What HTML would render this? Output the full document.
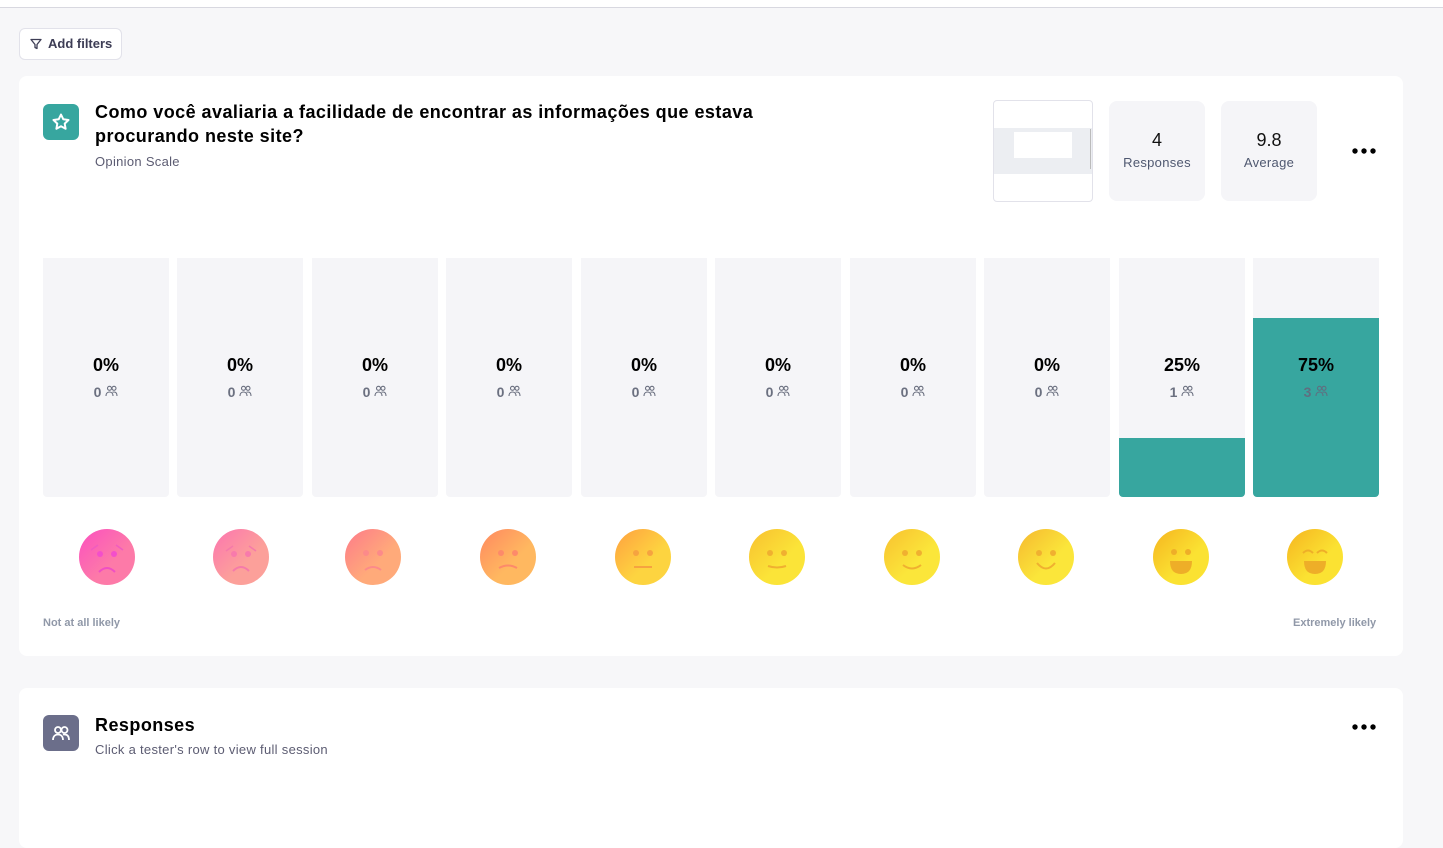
<!DOCTYPE html>
<html><head><meta charset="utf-8"><style>
body{margin:0;width:1443px;height:829px;background:#f7f7f9;font-family:"Liberation Sans",sans-serif;position:relative;overflow:hidden}
.top{position:absolute;left:0;top:0;width:1443px;height:7px;background:#fff;border-bottom:1px solid #d8d8e0}
.btn{position:absolute;left:19px;top:28px;width:101px;height:30px;background:#fff;border:1px solid #e2e2ea;border-radius:6px;font-size:13px;font-weight:bold;color:#3d3d55;line-height:30px}
.card{position:absolute;left:19px;background:#fff;border-radius:8px;width:1384px}
.ico{position:absolute;width:36px;height:36px;border-radius:6px}
.title{position:absolute;font-size:18px;font-weight:bold;color:#000;line-height:24px;letter-spacing:.45px}
.sub{position:absolute;font-size:13px;color:#5c5c72;letter-spacing:.3px}
.stat{position:absolute;top:25px;width:96px;height:100px;background:#f5f5f8;border-radius:8px;text-align:center}
.stat b{display:block;font-weight:normal;font-size:18px;color:#111;margin-top:29px;margin-bottom:3px}
.stat span{font-size:13px;color:#4f5870;letter-spacing:.3px}
.dots{position:absolute;line-height:0}
.col{position:absolute;top:258px;width:126px;height:239px;background:#f5f5f8;border-radius:0 0 4px 4px;overflow:hidden}
.fill{position:absolute;left:0;bottom:0;width:100%;background:#37a69f}
.pct{position:absolute;top:97px;width:100%;text-align:center;font-size:18px;font-weight:bold;color:#000}
.cnt{position:absolute;top:126px;width:100%;text-align:center;font-size:14px;font-weight:bold;color:#6b7080}
.emo{position:absolute;top:528px;width:58px;height:58px}
.lab{position:absolute;top:617px;font-size:11px;font-weight:bold;color:#9098a8}
</style></head><body>
<div class="top"></div>
<div class="btn"><svg width="12" height="12" viewBox="0 0 12 12" style="position:absolute;left:10px;top:9px"><path d="M1 1.5h10L7 6.5v4L5 9.5v-3z" fill="none" stroke="#3d3d55" stroke-width="1.3" stroke-linejoin="round"/></svg><span style="position:absolute;left:28px">Add filters</span></div>

<div class="card" style="top:76px;height:580px">
<div class="ico" style="left:24px;top:28px;background:#37a69f"><svg width="36" height="36" viewBox="0 0 36 36"><path d="M18 10.5l2.3 4.8 5.2.7-3.8 3.6.9 5.2-4.6-2.5-4.6 2.5.9-5.2-3.8-3.6 5.2-.7z" fill="none" stroke="#fff" stroke-width="2" stroke-linejoin="round"/></svg></div>
<div class="title" style="left:76px;top:24px;width:700px">Como você avaliaria a facilidade de encontrar as informações que estava procurando neste site?</div>
<div class="sub" style="left:76px;top:78px">Opinion Scale</div>
<div style="position:absolute;left:974px;top:24px;width:98px;height:100px;border:1px solid #e2e2ea;border-radius:4px;overflow:hidden;background:#fff">
<div style="position:absolute;left:0;top:27px;width:98px;height:46px;background:#eceef2"></div>
<div style="position:absolute;left:20px;top:31px;width:58px;height:26px;background:#fff"></div>
<div style="position:absolute;left:96px;top:28px;width:1px;height:40px;background:#bbb"></div>
</div>
<div class="stat" style="left:1090px"><b>4</b><span>Responses</span></div>
<div class="stat" style="left:1202px"><b>9.8</b><span>Average</span></div>
<div class="dots" style="left:1333px;top:72px">
<svg width="26" height="6"><circle cx="3" cy="3" r="2.7"/><circle cx="12" cy="3" r="2.7"/><circle cx="21" cy="3" r="2.7"/></svg></div>
</div>

<!-- columns -->
<div class="col" style="left:43px"><div class="pct">0%</div><div class="cnt">0 <svg width="13" height="12" viewBox="0 0 13 12"><g fill="none" stroke="#6b7080" stroke-width="1.1"><circle cx="4.5" cy="3.3" r="2"/><circle cx="9" cy="3.3" r="2"/><path d="M1 11c0-3 2-4 3.5-4s3.5 1 3.5 4M7.5 7.2c.5-.2 1-.2 1.5-.2 1.5 0 3 1 3 4"/></g></svg></div></div>
<div class="col" style="left:177px"><div class="pct">0%</div><div class="cnt">0 <svg width="13" height="12" viewBox="0 0 13 12"><g fill="none" stroke="#6b7080" stroke-width="1.1"><circle cx="4.5" cy="3.3" r="2"/><circle cx="9" cy="3.3" r="2"/><path d="M1 11c0-3 2-4 3.5-4s3.5 1 3.5 4M7.5 7.2c.5-.2 1-.2 1.5-.2 1.5 0 3 1 3 4"/></g></svg></div></div>
<div class="col" style="left:312px"><div class="pct">0%</div><div class="cnt">0 <svg width="13" height="12" viewBox="0 0 13 12"><g fill="none" stroke="#6b7080" stroke-width="1.1"><circle cx="4.5" cy="3.3" r="2"/><circle cx="9" cy="3.3" r="2"/><path d="M1 11c0-3 2-4 3.5-4s3.5 1 3.5 4M7.5 7.2c.5-.2 1-.2 1.5-.2 1.5 0 3 1 3 4"/></g></svg></div></div>
<div class="col" style="left:446px"><div class="pct">0%</div><div class="cnt">0 <svg width="13" height="12" viewBox="0 0 13 12"><g fill="none" stroke="#6b7080" stroke-width="1.1"><circle cx="4.5" cy="3.3" r="2"/><circle cx="9" cy="3.3" r="2"/><path d="M1 11c0-3 2-4 3.5-4s3.5 1 3.5 4M7.5 7.2c.5-.2 1-.2 1.5-.2 1.5 0 3 1 3 4"/></g></svg></div></div>
<div class="col" style="left:581px"><div class="pct">0%</div><div class="cnt">0 <svg width="13" height="12" viewBox="0 0 13 12"><g fill="none" stroke="#6b7080" stroke-width="1.1"><circle cx="4.5" cy="3.3" r="2"/><circle cx="9" cy="3.3" r="2"/><path d="M1 11c0-3 2-4 3.5-4s3.5 1 3.5 4M7.5 7.2c.5-.2 1-.2 1.5-.2 1.5 0 3 1 3 4"/></g></svg></div></div>
<div class="col" style="left:715px"><div class="pct">0%</div><div class="cnt">0 <svg width="13" height="12" viewBox="0 0 13 12"><g fill="none" stroke="#6b7080" stroke-width="1.1"><circle cx="4.5" cy="3.3" r="2"/><circle cx="9" cy="3.3" r="2"/><path d="M1 11c0-3 2-4 3.5-4s3.5 1 3.5 4M7.5 7.2c.5-.2 1-.2 1.5-.2 1.5 0 3 1 3 4"/></g></svg></div></div>
<div class="col" style="left:850px"><div class="pct">0%</div><div class="cnt">0 <svg width="13" height="12" viewBox="0 0 13 12"><g fill="none" stroke="#6b7080" stroke-width="1.1"><circle cx="4.5" cy="3.3" r="2"/><circle cx="9" cy="3.3" r="2"/><path d="M1 11c0-3 2-4 3.5-4s3.5 1 3.5 4M7.5 7.2c.5-.2 1-.2 1.5-.2 1.5 0 3 1 3 4"/></g></svg></div></div>
<div class="col" style="left:984px"><div class="pct">0%</div><div class="cnt">0 <svg width="13" height="12" viewBox="0 0 13 12"><g fill="none" stroke="#6b7080" stroke-width="1.1"><circle cx="4.5" cy="3.3" r="2"/><circle cx="9" cy="3.3" r="2"/><path d="M1 11c0-3 2-4 3.5-4s3.5 1 3.5 4M7.5 7.2c.5-.2 1-.2 1.5-.2 1.5 0 3 1 3 4"/></g></svg></div></div>
<div class="col" style="left:1119px"><div class="fill" style="height:59px"></div><div class="pct">25%</div><div class="cnt">1 <svg width="13" height="12" viewBox="0 0 13 12"><g fill="none" stroke="#6b7080" stroke-width="1.1"><circle cx="4.5" cy="3.3" r="2"/><circle cx="9" cy="3.3" r="2"/><path d="M1 11c0-3 2-4 3.5-4s3.5 1 3.5 4M7.5 7.2c.5-.2 1-.2 1.5-.2 1.5 0 3 1 3 4"/></g></svg></div></div>
<div class="col" style="left:1253px"><div class="fill" style="height:179px"></div><div class="pct">75%</div><div class="cnt" style="color:#5f6f80">3 <svg width="13" height="12" viewBox="0 0 13 12"><g fill="none" stroke="#5f6f80" stroke-width="1.1"><circle cx="4.5" cy="3.3" r="2"/><circle cx="9" cy="3.3" r="2"/><path d="M1 11c0-3 2-4 3.5-4s3.5 1 3.5 4M7.5 7.2c.5-.2 1-.2 1.5-.2 1.5 0 3 1 3 4"/></g></svg></div></div>

<!-- emojis -->
<svg class="emo" style="left:78px" viewBox="0 0 58 58"><defs><linearGradient id="g1" x1="0" y1="0" x2="1" y2="1"><stop offset="0" stop-color="#fb4fc0"/><stop offset=".6" stop-color="#fd7aa8"/></linearGradient></defs><circle cx="29" cy="29" r="28" fill="url(#g1)"/><path d="M13 22l7-5M45 22l-7-5" stroke="#f05cc0" stroke-width="1.5"/><circle cx="22" cy="26" r="3" fill="#f34fcb"/><circle cx="36" cy="26" r="3" fill="#f34fcb"/><path d="M21 44q8-8 16 0" fill="none" stroke="#f04fc4" stroke-width="2"/></svg>
<svg class="emo" style="left:212px" viewBox="0 0 58 58"><defs><linearGradient id="g2" x1="0" y1="0" x2="1" y2="1"><stop offset="0" stop-color="#fc74b0"/><stop offset=".6" stop-color="#fca09a"/></linearGradient></defs><circle cx="29" cy="29" r="28" fill="url(#g2)"/><path d="M14 23l7-5M44 23l-7-5" stroke="#f57aaa" stroke-width="1.5"/><circle cx="22" cy="26" r="3" fill="#f87aac"/><circle cx="36" cy="26" r="3" fill="#f87aac"/><path d="M21 43q8-8 16 0" fill="none" stroke="#f57aaa" stroke-width="2"/></svg>
<svg class="emo" style="left:344px" viewBox="0 0 58 58"><defs><linearGradient id="g3" x1="0" y1="0" x2="1" y2="1"><stop offset="0" stop-color="#fd7a8a"/><stop offset=".6" stop-color="#ffaa7a"/></linearGradient></defs><circle cx="29" cy="29" r="28" fill="url(#g3)"/><circle cx="22" cy="25" r="3" fill="#fc8a8a"/><circle cx="36" cy="25" r="3" fill="#fc8a8a"/><path d="M21 42q8-6 16 0" fill="none" stroke="#fc8a8a" stroke-width="2"/></svg>
<svg class="emo" style="left:479px" viewBox="0 0 58 58"><defs><linearGradient id="g4" x1="0" y1="0" x2="1" y2="1"><stop offset="0" stop-color="#ff8860"/><stop offset=".6" stop-color="#ffb860"/></linearGradient></defs><circle cx="29" cy="29" r="28" fill="url(#g4)"/><circle cx="22" cy="25" r="3" fill="#fd8a6a"/><circle cx="36" cy="25" r="3" fill="#fd8a6a"/><path d="M20 40q9-5 18 0" fill="none" stroke="#fd8a6a" stroke-width="2"/></svg>
<svg class="emo" style="left:614px" viewBox="0 0 58 58"><defs><linearGradient id="g5" x1="0" y1="0" x2="1" y2="1"><stop offset="0" stop-color="#ffa040"/><stop offset=".6" stop-color="#fdd440"/></linearGradient></defs><circle cx="29" cy="29" r="28" fill="url(#g5)"/><circle cx="22" cy="25" r="3" fill="#f6a340"/><circle cx="36" cy="25" r="3" fill="#f6a340"/><path d="M20 39h18" stroke="#f6a340" stroke-width="2"/></svg>
<svg class="emo" style="left:748px" viewBox="0 0 58 58"><defs><linearGradient id="g6" x1="0" y1="0" x2="1" y2="1"><stop offset="0" stop-color="#f8c030"/><stop offset=".6" stop-color="#fbe438"/></linearGradient></defs><circle cx="29" cy="29" r="28" fill="url(#g6)"/><circle cx="22" cy="25" r="3" fill="#f0b030"/><circle cx="36" cy="25" r="3" fill="#f0b030"/><path d="M20 38q9 3 18 0" fill="none" stroke="#f0b030" stroke-width="2"/></svg>
<svg class="emo" style="left:883px" viewBox="0 0 58 58"><defs><linearGradient id="g7" x1="0" y1="0" x2="1" y2="1"><stop offset="0" stop-color="#f8c030"/><stop offset=".6" stop-color="#fbe63a"/></linearGradient></defs><circle cx="29" cy="29" r="28" fill="url(#g7)"/><circle cx="22" cy="25" r="3" fill="#f0b030"/><circle cx="36" cy="25" r="3" fill="#f0b030"/><path d="M20 37q9 7 18 0" fill="none" stroke="#f0b030" stroke-width="2"/></svg>
<svg class="emo" style="left:1017px" viewBox="0 0 58 58"><defs><linearGradient id="g8" x1="0" y1="0" x2="1" y2="1"><stop offset="0" stop-color="#f5b830"/><stop offset=".6" stop-color="#fbe63a"/></linearGradient></defs><circle cx="29" cy="29" r="28" fill="url(#g8)"/><circle cx="22" cy="25" r="3" fill="#f0b030"/><circle cx="36" cy="25" r="3" fill="#f0b030"/><path d="M20 35q9 11 18 0" fill="none" stroke="#f0b030" stroke-width="2"/></svg>
<svg class="emo" style="left:1152px" viewBox="0 0 58 58"><defs><linearGradient id="g9" x1="0" y1="0" x2="1" y2="1"><stop offset="0" stop-color="#f5b420"/><stop offset=".6" stop-color="#fbe232"/></linearGradient></defs><circle cx="29" cy="29" r="28" fill="url(#g9)"/><circle cx="22" cy="24" r="3" fill="#eeae28"/><circle cx="36" cy="24" r="3" fill="#eeae28"/><path d="M18 33h22q0 13-11 13t-11-13z" fill="#eeae28"/></svg>
<svg class="emo" style="left:1286px" viewBox="0 0 58 58"><defs><linearGradient id="g10" x1="0" y1="0" x2="1" y2="1"><stop offset="0" stop-color="#f5b420"/><stop offset=".6" stop-color="#fbe232"/></linearGradient></defs><circle cx="29" cy="29" r="28" fill="url(#g10)"/><path d="M17 25q5-5 10 0M31 25q5-5 10 0" fill="none" stroke="#eeae28" stroke-width="2"/><path d="M18 33h22q0 13-11 13t-11-13z" fill="#eeae28"/></svg>

<div class="lab" style="left:43px">Not at all likely</div>
<div class="lab" style="left:1293px">Extremely likely</div>

<div class="card" style="top:688px;height:160px">
<div class="ico" style="left:24px;top:27px;background:#6b6e8a"><svg width="36" height="36" viewBox="0 0 36 36"><g fill="none" stroke="#fff" stroke-width="1.8"><circle cx="15" cy="15" r="3"/><circle cx="21.5" cy="15" r="3"/><path d="M10 25c0-4 2.5-5.5 5-5.5s5 1.5 5 5.5M20 19.7c.5-.2 1-.2 1.5-.2 2.5 0 4.5 1.5 4.5 5.5"/></g></svg></div>
<div class="title" style="left:76px;top:25px">Responses</div>
<div class="sub" style="left:76px;top:54px">Click a tester's row to view full session</div>
<div class="dots" style="left:1333px;top:36px"><svg width="26" height="6"><circle cx="3" cy="3" r="2.7"/><circle cx="12" cy="3" r="2.7"/><circle cx="21" cy="3" r="2.7"/></svg></div>
</div>
</body></html>
